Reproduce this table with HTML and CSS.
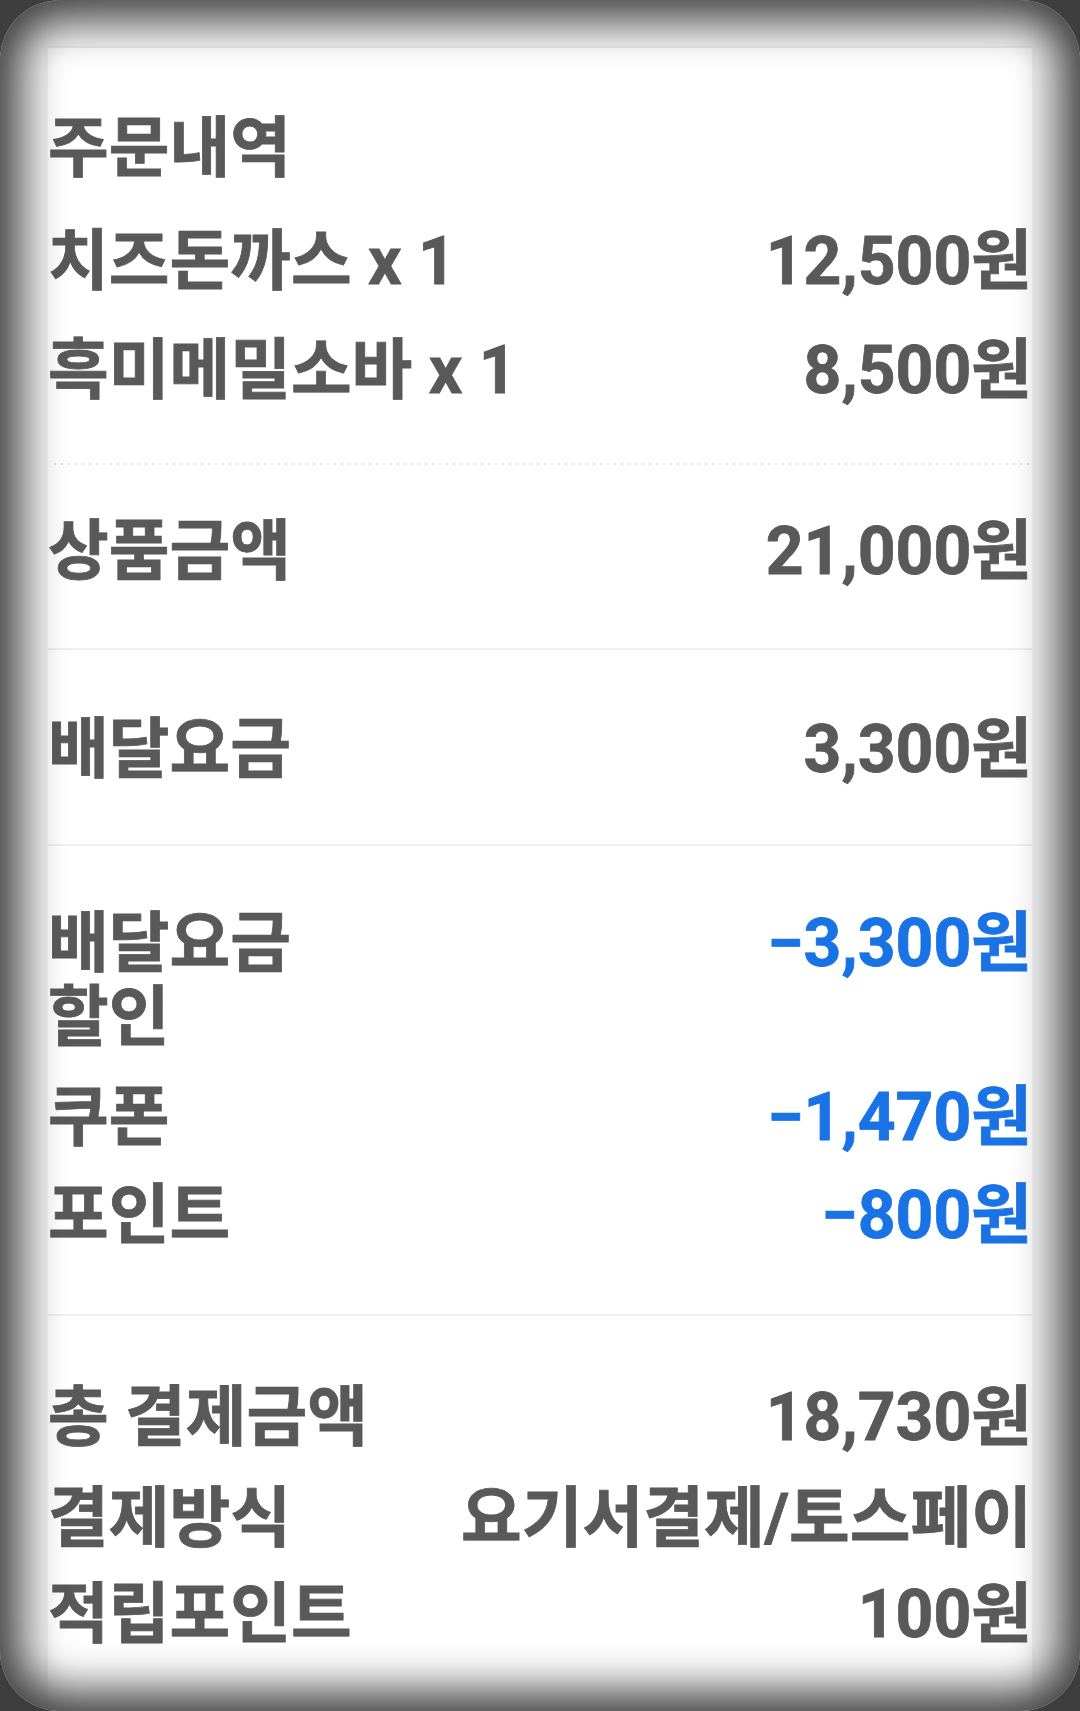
FILE: index.html
```html
<!DOCTYPE html>
<html lang="ko">
<head>
<meta charset="utf-8">
<title>주문내역</title>
<link rel="stylesheet" href="styles.css">
</head>
<body>
<div class="card">
  <section class="sec sec-items">
    <h2 class="row title"><span class="label">주문내역</span></h2>
    <div class="row item1"><span class="label">치즈돈까스 x 1</span><span class="val">12,500원</span></div>
    <div class="row item2"><span class="label">흑미메밀소바 x 1</span><span class="val">8,500원</span></div>
  </section>
  <div class="dotted"></div>
  <section class="sec sec-sub">
    <div class="row"><span class="label">상품금액</span><span class="val">21,000원</span></div>
  </section>
  <div class="rule"></div>
  <section class="sec sec-fee">
    <div class="row"><span class="label">배달요금</span><span class="val">3,300원</span></div>
  </section>
  <div class="rule"></div>
  <section class="sec sec-disc">
    <div class="row"><span class="label narrow">배달요금 할인</span><span class="val blue">−3,300원</span></div>
    <div class="row r-coupon"><span class="label">쿠폰</span><span class="val blue">−1,470원</span></div>
    <div class="row r-point"><span class="label">포인트</span><span class="val blue">−800원</span></div>
  </section>
  <div class="rule"></div>
  <section class="sec sec-total">
    <div class="row"><span class="label">총 결제금액</span><span class="val">18,730원</span></div>
    <div class="row r-method"><span class="label">결제방식</span><span class="val">요기서결제/토스페이</span></div>
    <div class="row r-earn"><span class="label">적립포인트</span><span class="val">100원</span></div>
  </section>
</div>
<div class="vignette"></div>
</body>
</html>
```

FILE: styles.css
```css
html, body {
  margin: 0;
  padding: 0;
  height: 100%;
  overflow: hidden;
}
body {
  background: #f4f4f4;
  font-family: Roboto, "Noto Sans CJK KR", sans-serif;
  color: #595959;
  font-weight: 700;
}
.card {
  margin: 46px 48px 0;
  background: #ffffff;
  border-top: 2px solid #ebebeb;
  min-height: 1700px;
}
.sec {
  display: flex;
  flex-direction: column;
}
.row {
  display: flex;
  justify-content: space-between;
  align-items: flex-start;
  font-size: 66px;
  line-height: 74px;
  margin: 0;
  font-weight: 700;
  -webkit-text-stroke: 0.8px #595959;
}
.label {
  white-space: nowrap;
}
.label.narrow {
  white-space: normal;
  word-break: keep-all;
  max-width: 330px;
}
.val {
  text-align: right;
  white-space: nowrap;
}
.val.blue {
  color: #1a73e4;
  -webkit-text-stroke: 0.8px #1a73e4;
}
.sec-items { padding: 64px 0 55px; }
.item1 { margin-top: 39px; }
.item2 { margin-top: 35px; }
.dotted {
  height: 2px;
  margin-left: 6px;
  background-image: linear-gradient(to right, #e2e2e2 2px, transparent 2px);
  background-size: 7px 2px;
}
.rule {
  height: 2px;
  background: #efefef;
}
.sec-sub { padding: 50px 0 59px; }
.sec-fee { padding: 63px 0 57px; }
.sec-disc { padding: 61px 0 61px; }
.r-coupon { margin-top: 26px; }
.r-point { margin-top: 24px; }
.sec-total { padding: 65px 0 0; }
.r-method { margin-top: 27px; }
.r-earn { margin-top: 22px; }
.vignette {
  position: fixed;
  top: 0;
  left: 0;
  right: 0;
  bottom: 0;
  pointer-events: none;
  border-radius: 60px;
  box-shadow: 0 0 0 200px #3e3e3e, inset 0 0 44px 20px #3e3e3e;
}
```
